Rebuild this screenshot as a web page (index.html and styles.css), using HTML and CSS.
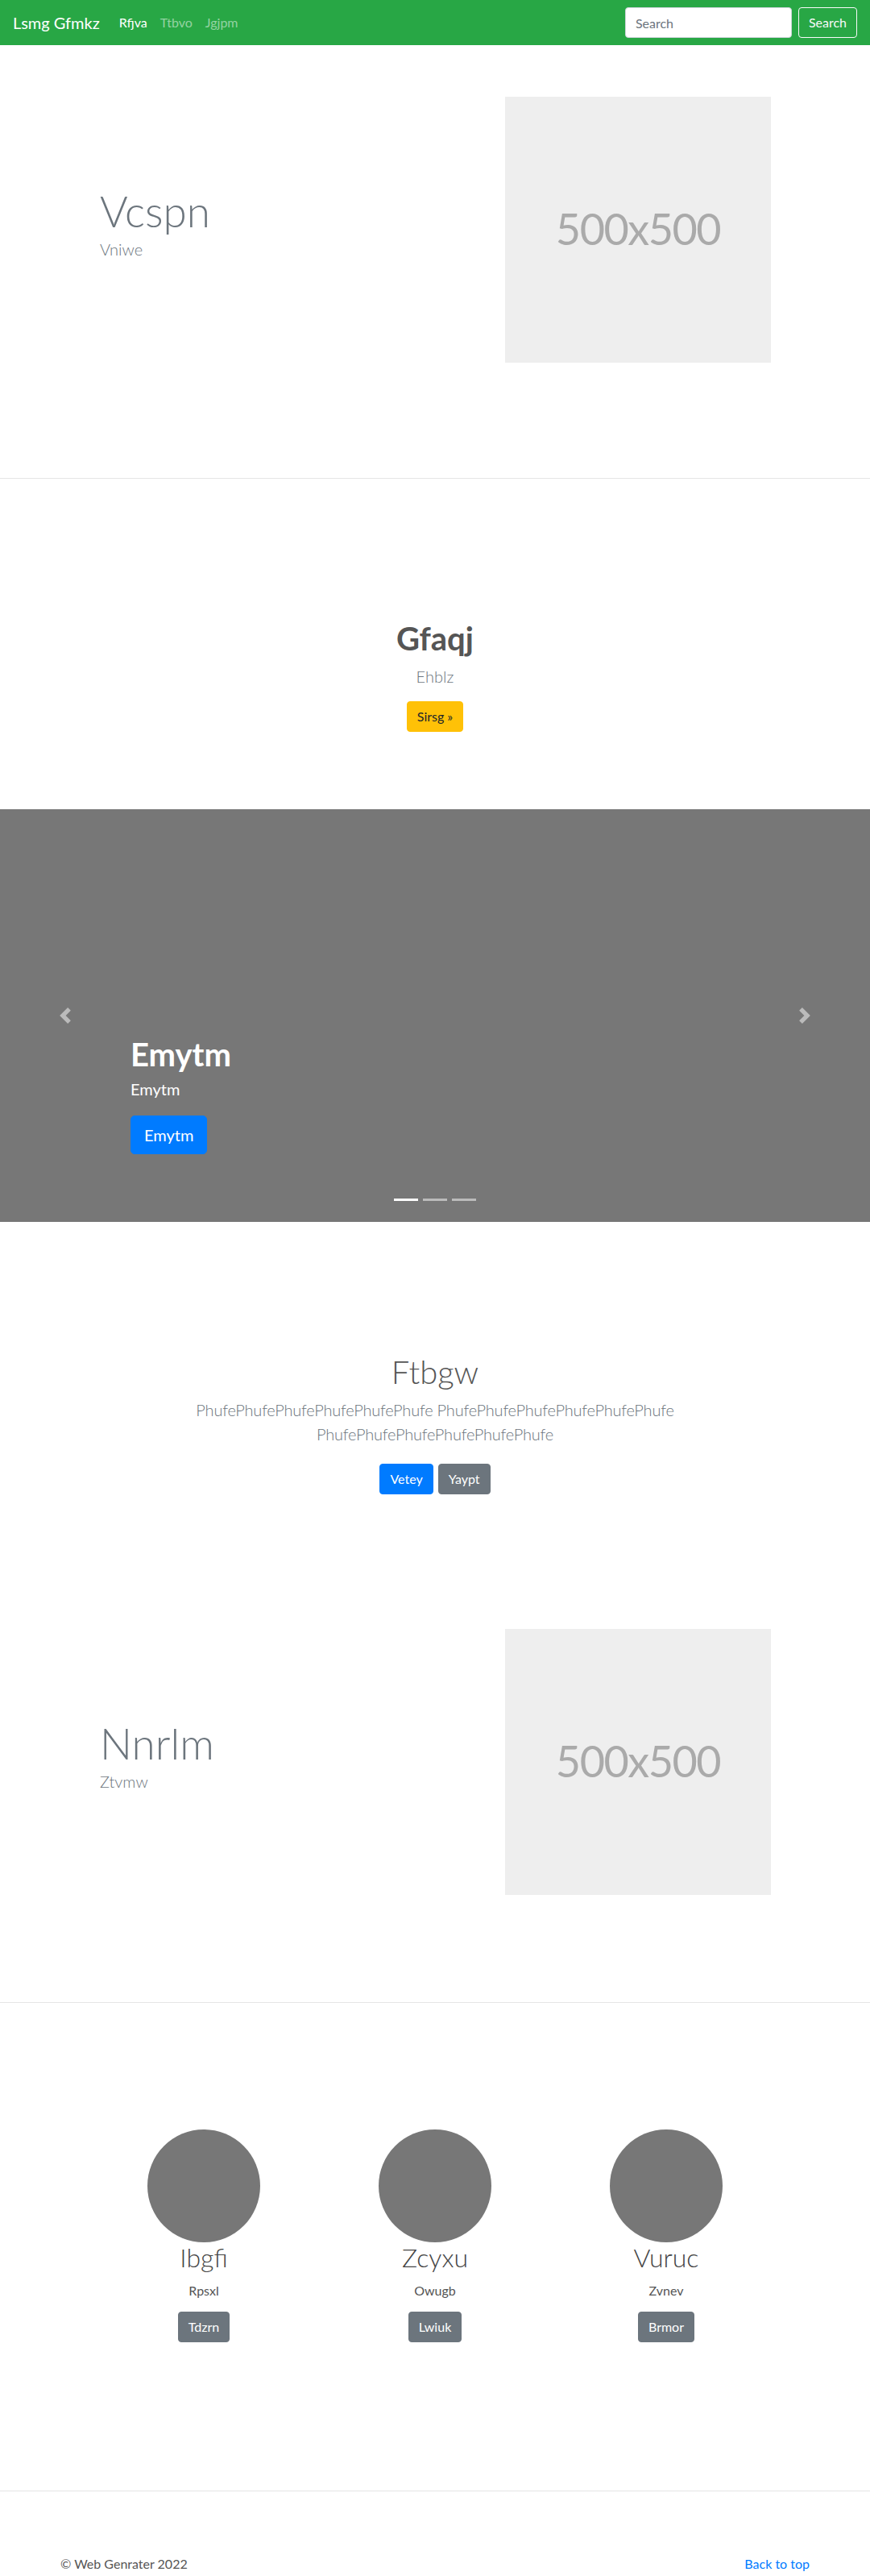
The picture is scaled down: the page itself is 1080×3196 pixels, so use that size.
FILE: index.html
```html
<!DOCTYPE html>
<html lang="en">
<head>
<meta charset="utf-8">
<title>Lsmg Gfmkz</title>
<link rel="stylesheet" href="styles.css">
</head>
<body>
<header class="navbar">
  <a class="brand" href="#">Lsmg Gfmkz</a>
  <nav class="nav">
    <a class="nav-link active" href="#">Rfjva</a>
    <a class="nav-link" href="#">Ttbvo</a>
    <a class="nav-link" href="#">Jgjpm</a>
  </nav>
  <form class="search">
    <input class="search-input" type="text" placeholder="Search">
    <button class="btn btn-outline-light" type="button">Search</button>
  </form>
</header>

<section class="feature feature-first">
  <div class="feature-row">
    <div class="feature-text">
      <h1 class="display">Vcspn</h1>
      <p class="lead muted">Vniwe</p>
    </div>
    <div class="ph"><span>500x500</span></div>
  </div>
</section>

<section class="jumbo">
  <h1 class="jumbo-title">Gfaqj</h1>
  <p class="lead muted">Ehblz</p>
  <a class="btn btn-warning" href="#">Sirsg &raquo;</a>
</section>

<section class="carousel">
  <a class="ctrl ctrl-prev" href="#">
    <svg width="20" height="20" viewBox="0 0 8 8"><path d="M5.25 0l-4 4 4 4 1.5-1.5L4.25 4l2.5-2.5L5.25 0z"/></svg>
  </a>
  <a class="ctrl ctrl-next" href="#">
    <svg width="20" height="20" viewBox="0 0 8 8"><path d="M2.75 0l-1.5 1.5L3.75 4l-2.5 2.5L2.75 8l4-4-4-4z"/></svg>
  </a>
  <div class="caption">
    <h1 class="caption-title">Emytm</h1>
    <p class="caption-text">Emytm</p>
    <p class="caption-btn"><a class="btn btn-lg btn-primary" href="#">Emytm</a></p>
  </div>
  <ol class="indicators">
    <li class="active"></li>
    <li></li>
    <li></li>
  </ol>
</section>

<section class="intro">
  <h1 class="intro-title">Ftbgw</h1>
  <p class="lead muted intro-text">PhufePhufePhufePhufePhufePhufe PhufePhufePhufePhufePhufePhufe PhufePhufePhufePhufePhufePhufe</p>
  <div class="intro-btns">
    <a class="btn btn-primary" href="#">Vetey</a>
    <a class="btn btn-secondary" href="#">Yaypt</a>
  </div>
</section>

<section class="feature feature-second">
  <div class="feature-row">
    <div class="feature-text">
      <h1 class="display">Nnrlm</h1>
      <p class="lead muted">Ztvmw</p>
    </div>
    <div class="ph"><span>500x500</span></div>
  </div>
</section>

<section class="team">
  <div class="team-grid">
    <div class="member">
      <div class="avatar"></div>
      <h2 class="member-name">Ibgfi</h2>
      <p class="member-role">Rpsxl</p>
      <a class="btn btn-secondary" href="#">Tdzrn</a>
    </div>
    <div class="member">
      <div class="avatar"></div>
      <h2 class="member-name">Zcyxu</h2>
      <p class="member-role">Owugb</p>
      <a class="btn btn-secondary" href="#">Lwiuk</a>
    </div>
    <div class="member">
      <div class="avatar"></div>
      <h2 class="member-name">Vuruc</h2>
      <p class="member-role">Zvnev</p>
      <a class="btn btn-secondary" href="#">Brmor</a>
    </div>
  </div>
</section>

<footer class="footer">
  <p class="copy">&copy; Web Genrater 2022</p>
  <a class="totop" href="#">Back to top</a>
</footer>
</body>
</html>
```

FILE: styles.css
```css
* { box-sizing: border-box; }
html, body { margin: 0; padding: 0; }
body {
  font-family: Lato, "Open Sans", "Liberation Sans", sans-serif;
  font-size: 16px;
  line-height: 1.5;
  color: #212529;
  background: #fff;
}
a { text-decoration: none; }
h1, h2, p { margin: 0; }

/* navbar */
.navbar {
  height: 56px;
  background: #28a745;
  display: flex;
  align-items: center;
  padding: 0 16px;
}
.brand {
  color: #fff;
  font-size: 20px;
  line-height: 30px;
  margin-right: 16px;
}
.nav { display: flex; flex: 1; }
.nav-link {
  color: rgba(255,255,255,.5);
  padding: 8px;
  font-size: 16px;
}
.nav-link.active { color: #fff; }
.search { display: flex; align-items: center; gap: 8px; }
.search-input {
  width: 207px;
  height: 38px;
  padding: 6px 12px;
  font: inherit;
  font-size: 16px;
  color: #495057;
  background: #fff;
  border: 1px solid #ced4da;
  border-radius: 4px;
}
.search-input::placeholder { color: #6c757d; }

/* buttons */
.btn {
  display: inline-block;
  font: inherit;
  font-size: 16px;
  line-height: 24px;
  padding: 6px 12px;
  border: 1px solid transparent;
  border-radius: 4px;
  cursor: pointer;
}
.btn-outline-light { color: #f8f9fa; background: transparent; border-color: #f8f9fa; }
.btn-warning { color: #212529; background: #ffc107; border-color: #ffc107; }
.btn-primary { color: #fff; background: #007bff; border-color: #007bff; }
.btn-secondary { color: #fff; background: #6c757d; border-color: #6c757d; }
.btn-lg { font-size: 20px; line-height: 30px; padding: 8px 16px; border-radius: 5px; }

/* common text */
.lead { font-size: 20px; font-weight: 300; line-height: 30px; }
.muted { color: #6c757d; }

/* feature rows */
.feature { border-bottom: 1px solid #e5e5e5; }
.feature-first { padding: 64px 0 143px; }
.feature-second { padding: 64px 0 133px; }
.feature-row {
  width: 960px;
  margin: 0 auto;
  display: flex;
  align-items: center;
}
.feature-text { flex: 1; padding: 0 0 16px 64px; }
.display {
  font-size: 53px;
  font-weight: 300;
  line-height: 1.2;
  color: #6c757d;
  margin-bottom: 0;
}
.ph {
  width: 330px;
  height: 330px;
  margin-right: 63px;
  background: #eee;
  display: flex;
  align-items: center;
  justify-content: center;
}
.ph span {
  color: #aaa;
  font-size: 54px;
  letter-spacing: -1.5px;
  padding-bottom: 4px;
}

/* jumbotron */
.jumbo {
  text-align: center;
  padding: 174px 0 96px;
}
.jumbo-title {
  font-size: 40px;
  font-weight: 700;
  line-height: 48px;
  color: #555;
  margin-bottom: 8px;
}
.jumbo .lead { margin-bottom: 16px; }

/* carousel */
.carousel {
  position: relative;
  height: 512px;
  background: #777;
}
.ctrl {
  position: absolute;
  top: 0;
  bottom: 0;
  width: 15%;
  display: flex;
  align-items: center;
  justify-content: center;
}
.ctrl svg { fill: #fff; opacity: .5; }
.ctrl-prev { left: 0; }
.ctrl-next { right: 0; }
.caption {
  position: absolute;
  left: 15%;
  right: 15%;
  bottom: 48px;
  padding-bottom: 20px;
  color: #fff;
}
.caption-title {
  font-size: 40px;
  font-weight: 700;
  line-height: 48px;
  margin-bottom: 4px;
}
.caption-text { font-size: 20px; line-height: 30px; margin-bottom: 18px; }
.caption-btn { margin-bottom: 16px; }
.indicators {
  position: absolute;
  left: 0;
  right: 0;
  bottom: 26px;
  margin: 0;
  padding: 0;
  list-style: none;
  display: flex;
  justify-content: center;
  gap: 6px;
}
.indicators li {
  width: 30px;
  height: 3px;
  background: #fff;
  opacity: .5;
}
.indicators li.active { opacity: 1; }

/* intro */
.intro {
  text-align: center;
  padding: 162px 0 103px;
}
.intro-title {
  font-size: 40px;
  font-weight: 300;
  line-height: 48px;
  color: #555;
  margin-bottom: 8px;
}
.intro-text {
  max-width: 640px;
  margin: 0 auto 22px;
  letter-spacing: -0.2px;
}
.intro-btns { display: flex; justify-content: center; gap: 6px; }

/* team */
.team {
  padding: 157px 0 184px;
  border-bottom: 1px solid #e5e5e5;
}
.team-grid {
  display: grid;
  grid-template-columns: repeat(3, 287px);
  justify-content: center;
}
.member { text-align: center; }
.avatar {
  width: 140px;
  height: 140px;
  border-radius: 50%;
  background: #777;
  margin: 0 auto;
}
.member-name {
  font-size: 32px;
  font-weight: 300;
  line-height: 38px;
  color: #444;
  margin-bottom: 10px;
}
.member-role { color: #555; margin-bottom: 14px; }

/* footer */
.footer {
  width: 960px;
  margin: 0 auto;
  padding: 78px 15px 0;
  display: flex;
  justify-content: space-between;
  color: #555;
}
.totop { color: #007bff; }
```
